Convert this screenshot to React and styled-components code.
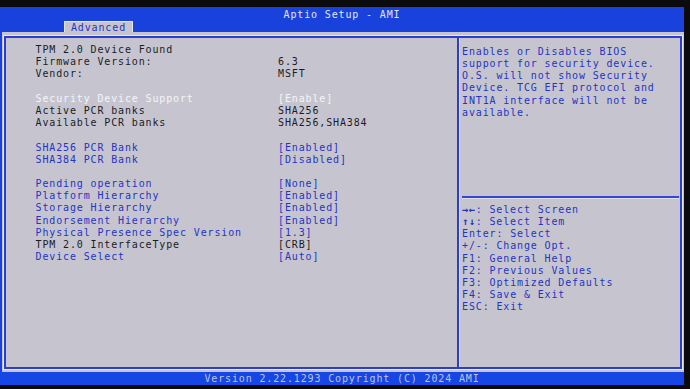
import styled, { createGlobalStyle } from 'styled-components';

const GlobalStyle = createGlobalStyle`
  html, body {
    margin: 0;
    padding: 0;
    background: #0b0b0e;
    overflow: hidden;
  }
`;

const BLUE_TEXT = '#2434c4';
const GRAY_BG = '#c6c5cf';

const Screen = styled.div`
  margin-top: 7px;
  width: 684px;
  height: 378px;
  display: flex;
  flex-direction: column;
  background: #1942dc;
  font-family: 'DejaVu Sans Mono', 'Liberation Mono', monospace;
  font-size: 10px;
  letter-spacing: 0.86px;
  line-height: 12.2px;
`;

const Header = styled.div`
  height: 25px;
  display: flex;
  flex-direction: column;
`;

const Title = styled.div`
  height: 12px;
  padding-top: 1.5px;
  text-align: center;
  color: #e2e6f4;
`;

const TabRow = styled.div`
  flex: 1;
  display: flex;
  align-items: flex-end;
  padding-left: 64px;
`;

const Tab = styled.div`
  width: 69px;
  height: 13px;
  line-height: 13px;
  text-align: center;
  background: ${GRAY_BG};
  color: ${BLUE_TEXT};
  box-shadow: inset 1px 1px 0 #e4e4ec, inset -1px 0 0 #e4e4ec;
`;

const Main = styled.div`
  flex: 1;
  margin-left: 2px;
  padding: 4px 2px 3px 2px;
  background: ${GRAY_BG};
  display: flex;
`;

const Frame = styled.div`
  flex: 1;
  display: grid;
  grid-template-columns: 451px 2px 1fr;
  border: 2px solid #2a3ed4;
  box-shadow: 0 0 0 1px #e8e8f0;
`;

const LeftPanel = styled.div`
  padding: 6px 0 0 29.5px;
`;

const Divider = styled.div`
  background: #2a3ed4;
  box-shadow: 1px 0 0 #e0e0ea;
`;

const RightPanel = styled.div`
  display: flex;
  flex-direction: column;
`;

const Help = styled.div`
  height: 150px;
  padding: 8px 0 0 3px;
  color: ${BLUE_TEXT};
`;

const Rule = styled.div`
  height: 1.5px;
  margin: 0 1px 0 3px;
  background: #3347d0;
  box-shadow: 0 1px 0 #e0e0ea;
`;

const Keys = styled.div`
  padding: 6.5px 0 0 3px;
  color: ${BLUE_TEXT};
`;

const Line = styled.div`
  height: 12.15px;
  white-space: pre;
`;

const Arrows = styled.span`
  font-size: 10.4px;
  letter-spacing: 0.6px;
  font-weight: bold;
  line-height: 0;
`;

const toneColor = {
  gray: '#1c1c26',
  blue: BLUE_TEXT,
  white: '#f4f4f8',
};

const Row = styled.div`
  display: grid;
  grid-template-columns: 242.5px 1fr;
  height: 12.2px;
  white-space: pre;
  color: ${(p) => toneColor[p.$tone]};
`;

const Footer = styled.div`
  height: 13px;
  line-height: 13px;
  text-align: center;
  color: #bfc4e0;
  background: #1646e4;
`;

const rows = [
  { label: 'TPM 2.0 Device Found', tone: 'gray' },
  { label: 'Firmware Version:', value: '6.3', tone: 'gray' },
  { label: 'Vendor:', value: 'MSFT', tone: 'gray' },
  null,
  { label: 'Security Device Support', value: '[Enable]', tone: 'white' },
  { label: 'Active PCR banks', value: 'SHA256', tone: 'gray' },
  { label: 'Available PCR banks', value: 'SHA256,SHA384', tone: 'gray' },
  null,
  { label: 'SHA256 PCR Bank', value: '[Enabled]', tone: 'blue' },
  { label: 'SHA384 PCR Bank', value: '[Disabled]', tone: 'blue' },
  null,
  { label: 'Pending operation', value: '[None]', tone: 'blue' },
  { label: 'Platform Hierarchy', value: '[Enabled]', tone: 'blue' },
  { label: 'Storage Hierarchy', value: '[Enabled]', tone: 'blue' },
  { label: 'Endorsement Hierarchy', value: '[Enabled]', tone: 'blue' },
  { label: 'Physical Presence Spec Version', value: '[1.3]', tone: 'blue' },
  { label: 'TPM 2.0 InterfaceType', value: '[CRB]', tone: 'gray' },
  { label: 'Device Select', value: '[Auto]', tone: 'blue' },
];

const helpLines = [
  'Enables or Disables BIOS',
  'support for security device.',
  'O.S. will not show Security',
  'Device. TCG EFI protocol and',
  'INT1A interface will not be',
  'available.',
];

const keyLines = [
  { arrows: '\u2192\u2190', text: ': Select Screen' },
  { arrows: '\u2191\u2193', text: ': Select Item' },
  { text: 'Enter: Select' },
  { text: '+/-: Change Opt.' },
  { text: 'F1: General Help' },
  { text: 'F2: Previous Values' },
  { text: 'F3: Optimized Defaults' },
  { text: 'F4: Save & Exit' },
  { text: 'ESC: Exit' },
];

export default function App() {
  return (
    <>
      <GlobalStyle />
      <Screen>
        <Header>
          <Title>Aptio Setup - AMI</Title>
          <TabRow>
            <Tab>Advanced</Tab>
          </TabRow>
        </Header>
        <Main>
          <Frame>
            <LeftPanel>
              {rows.map((r, i) =>
                r ? (
                  <Row key={i} $tone={r.tone}>
                    <span>{r.label}</span>
                    <span>{r.value || ''}</span>
                  </Row>
                ) : (
                  <Row key={i} $tone="gray" />
                )
              )}
            </LeftPanel>
            <Divider />
            <RightPanel>
              <Help>
                {helpLines.map((l) => (
                  <Line key={l}>{l}</Line>
                ))}
              </Help>
              <Rule />
              <Keys>
                {keyLines.map((k) => (
                  <Line key={k.text}>
                    {k.arrows && <Arrows>{k.arrows}</Arrows>}
                    {k.text}
                  </Line>
                ))}
              </Keys>
            </RightPanel>
          </Frame>
        </Main>
        <Footer>Version 2.22.1293 Copyright (C) 2024 AMI</Footer>
      </Screen>
    </>
  );
}
